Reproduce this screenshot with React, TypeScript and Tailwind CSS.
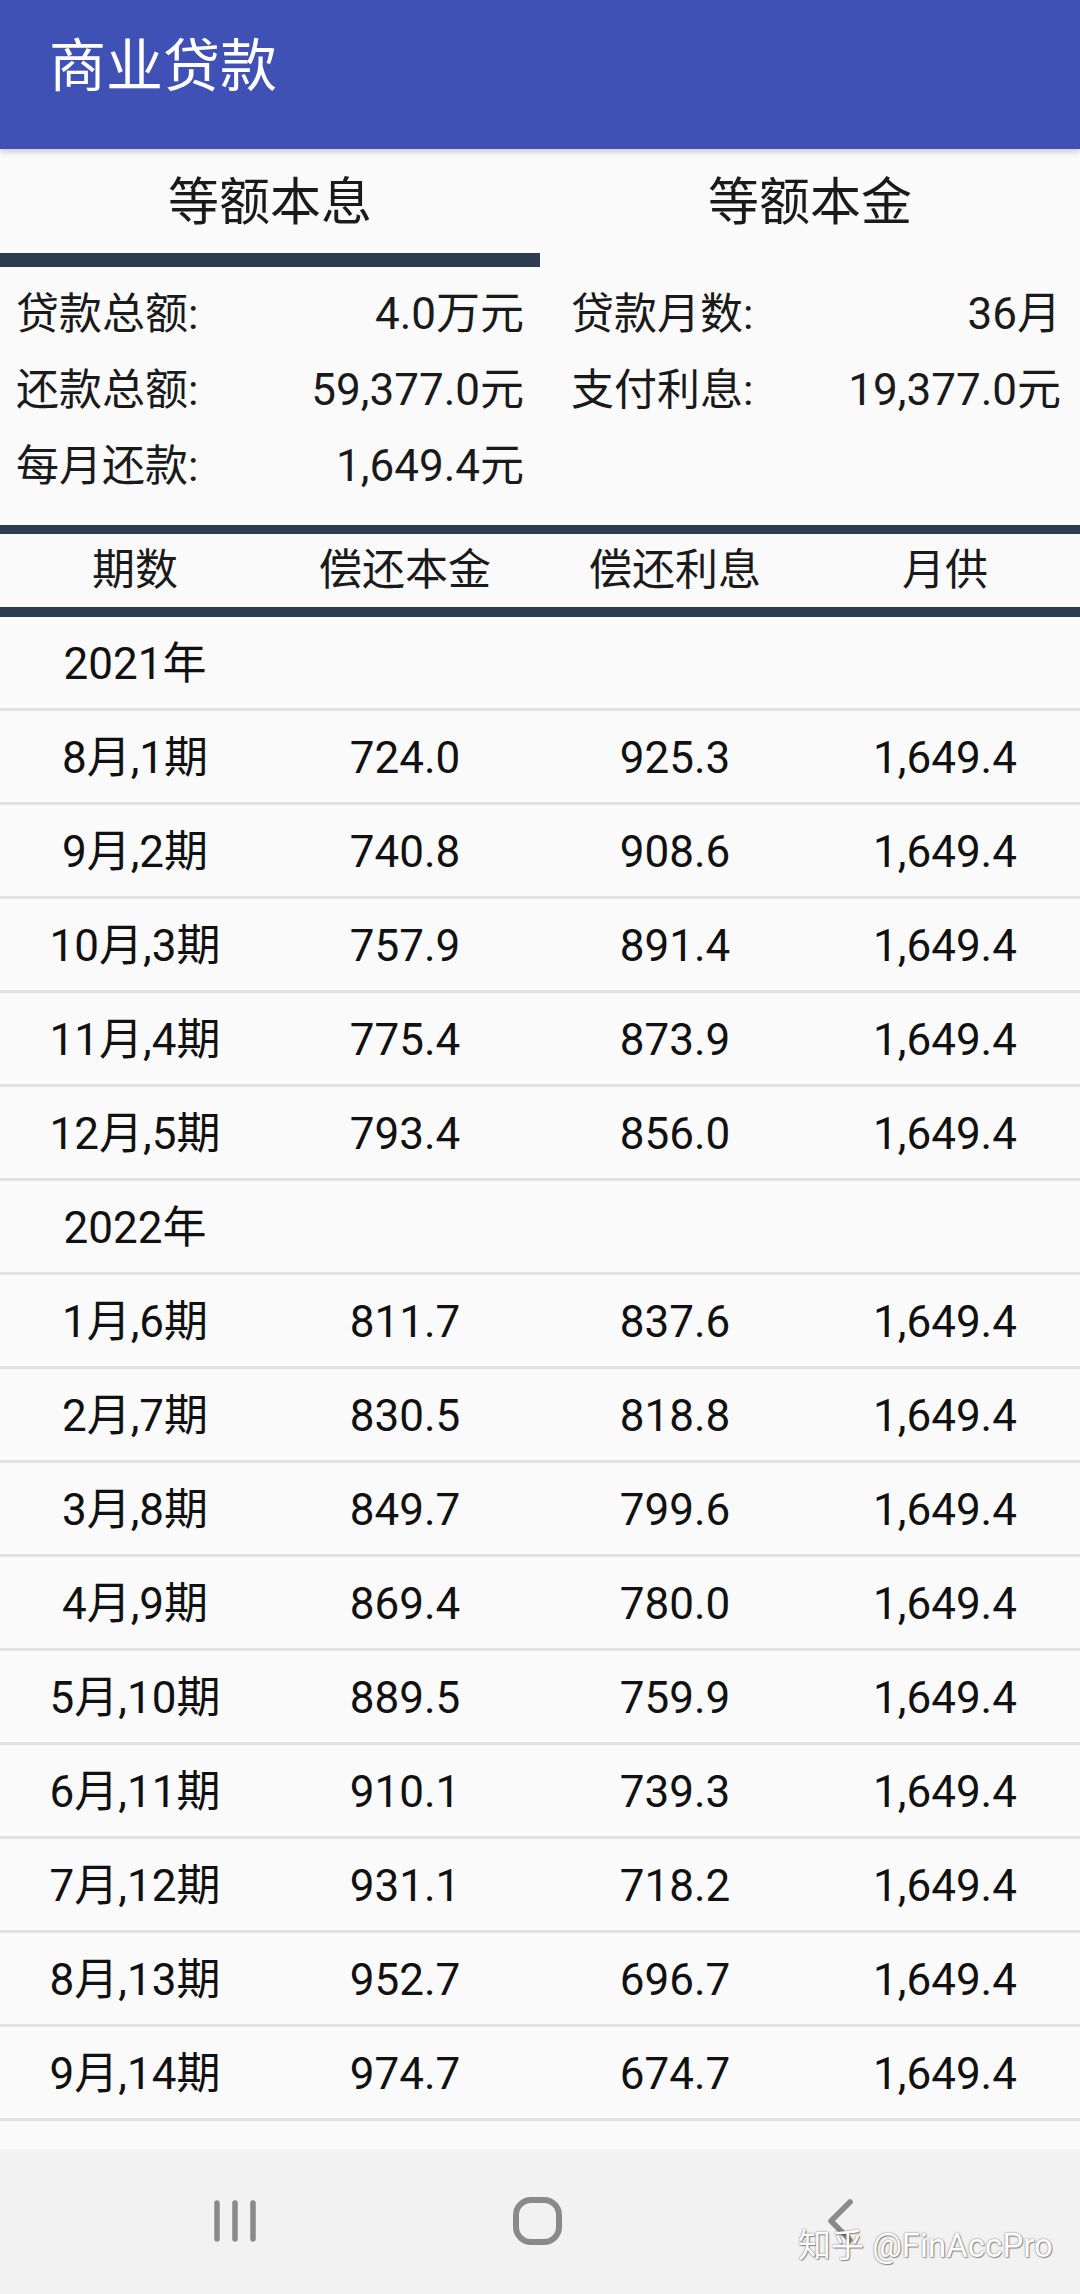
const rows2021 = [
  ['8月,1期', '724.0', '925.3'],
  ['9月,2期', '740.8', '908.6'],
  ['10月,3期', '757.9', '891.4'],
  ['11月,4期', '775.4', '873.9'],
  ['12月,5期', '793.4', '856.0'],
]

const rows2022 = [
  ['1月,6期', '811.7', '837.6'],
  ['2月,7期', '830.5', '818.8'],
  ['3月,8期', '849.7', '799.6'],
  ['4月,9期', '869.4', '780.0'],
  ['5月,10期', '889.5', '759.9'],
  ['6月,11期', '910.1', '739.3'],
  ['7月,12期', '931.1', '718.2'],
  ['8月,13期', '952.7', '696.7'],
  ['9月,14期', '974.7', '674.7'],
]

function YearRow({ year }: { year: string }) {
  return (
    <div className="grid grid-cols-4 h-[94px] border-b-[3px] border-[#e2e2e2] items-center pt-[2px] text-[44px] text-[#111]">
      <div className="text-center">{year}</div>
    </div>
  )
}

function DataRow({ period, principal, interest }: { period: string; principal: string; interest: string }) {
  return (
    <div className="grid grid-cols-4 h-[94px] border-b-[3px] border-[#e2e2e2] items-center pt-[2px] text-[44px] text-[#111]">
      <div className="text-center">{period}</div>
      <div className="text-center">{principal}</div>
      <div className="text-center">{interest}</div>
      <div className="text-center">1,649.4</div>
    </div>
  )
}

function SummaryCell({ label, value, right }: { label: string; value?: string; right?: boolean }) {
  return (
    <div className={right ? 'flex items-center justify-between h-[76px] pl-[31px] pr-[19px]' : 'flex items-center justify-between h-[76px] pl-[16px] pr-[16px]'}>
      <span className="text-[43px]">{label}</span>
      <span className="text-[44px]">{value}</span>
    </div>
  )
}

export default function App() {
  return (
    <div className="relative h-[2294px] w-[1080px] flex flex-col bg-[#fafafa] font-[Roboto,'Noto_Sans_CJK_SC',sans-serif] overflow-hidden">
      {/* Toolbar */}
      <div className="relative z-10 h-[149px] shrink-0 bg-[#3f51b5] shadow-[0_3px_6px_rgba(0,0,0,0.18)]">
        <h1 className="pl-[49px] pt-[39px] text-[57px] leading-[56px] text-white">商业贷款</h1>
      </div>

      {/* Tabs */}
      <div className="grid grid-cols-2 shrink-0">
        <div className="flex flex-col">
          <div className="h-[104px] flex items-center justify-center pt-[4px] text-[51px] text-[#1a1a1a]">等额本息</div>
          <div className="h-[14px] bg-[#2e3c52]" />
        </div>
        <div className="flex flex-col">
          <div className="h-[104px] flex items-center justify-center pt-[4px] text-[51px] text-[#1a1a1a]">等额本金</div>
          <div className="h-[14px]" />
        </div>
      </div>

      {/* Summary */}
      <div className="grid grid-cols-2 pt-[9px] pb-[21px] text-[#1a1a1a] shrink-0">
        <SummaryCell label="贷款总额:" value="4.0万元" />
        <SummaryCell label="贷款月数:" value="36月" right />
        <SummaryCell label="还款总额:" value="59,377.0元" />
        <SummaryCell label="支付利息:" value="19,377.0元" right />
        <SummaryCell label="每月还款:" value="1,649.4元" />
        <div />
      </div>

      {/* Table header */}
      <div className="h-[9px] bg-[#2e3c52] shrink-0" />
      <div className="grid grid-cols-4 h-[73px] items-center text-[43px] text-[#1a1a1a] shrink-0">
        <div className="text-center">期数</div>
        <div className="text-center">偿还本金</div>
        <div className="text-center">偿还利息</div>
        <div className="text-center">月供</div>
      </div>
      <div className="h-[10px] bg-[#2e3c52] shrink-0" />

      {/* Rows */}
      <div className="flex-1 overflow-hidden">
        <YearRow year="2021年" />
        {rows2021.map(r => (
          <DataRow key={r[0]} period={r[0]} principal={r[1]} interest={r[2]} />
        ))}
        <YearRow year="2022年" />
        {rows2022.map(r => (
          <DataRow key={r[0]} period={r[0]} principal={r[1]} interest={r[2]} />
        ))}
      </div>

      {/* Navigation bar */}
      <div className="h-[145px] shrink-0 bg-[#f2f2f2] flex items-center pl-[214px] pb-[2px]">
        <svg width="42" height="44" viewBox="0 0 42 44" fill="none" stroke="#8a8a8a" strokeWidth="5.5" strokeLinecap="round">
          <line x1="3" y1="4" x2="3" y2="40" />
          <line x1="21" y1="4" x2="21" y2="40" />
          <line x1="39" y1="4" x2="39" y2="40" />
        </svg>
        <svg className="ml-[257px]" width="49" height="48" viewBox="0 0 49 48" fill="none" stroke="#8a8a8a" strokeWidth="6">
          <rect x="3" y="3" width="43" height="42" rx="15" />
        </svg>
        <svg className="ml-[265px]" width="27" height="46" viewBox="0 0 27 46" fill="none" stroke="#8a8a8a" strokeWidth="5.5" strokeLinecap="round" strokeLinejoin="round">
          <polyline points="23,4 4,23 23,42" />
        </svg>
      </div>

      {/* Watermark */}
      <div className="absolute left-[798px] top-[2229px] text-[33px] leading-none text-white [text-shadow:0_0_2px_rgba(0,0,0,0.55),1px_1px_1px_rgba(0,0,0,0.35)]">
        知乎 @FinAccPro
      </div>
    </div>
  )
}
